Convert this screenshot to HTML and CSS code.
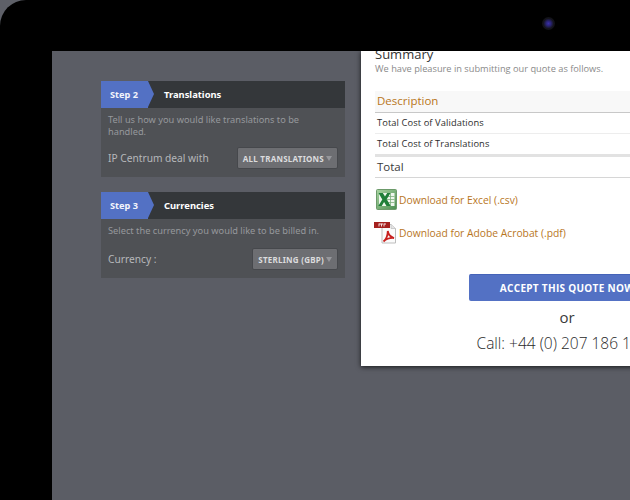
FILE: index.html
```html
<!DOCTYPE html>
<html lang="en">
<head>
<meta charset="utf-8">
<title>Quote</title>
<link rel="stylesheet" href="styles.css">
</head>
<body>
<div class="device">
  <div class="camera"></div>
  <div class="screen">
    <div class="steps">
      <section class="panel">
        <header class="panel-head">
          <span class="step">Step 2</span>
          <span class="panel-title">Translations</span>
        </header>
        <div class="panel-body">
          <p class="hint">Tell us how you would like translations to be handled.</p>
          <div class="field">
            <span class="field-label">IP Centrum deal with</span>
            <span class="select">ALL TRANSLATIONS<i class="caret"></i></span>
          </div>
        </div>
      </section>
      <section class="panel">
        <header class="panel-head">
          <span class="step">Step 3</span>
          <span class="panel-title">Currencies</span>
        </header>
        <div class="panel-body">
          <p class="hint hint-single">Select the currency you would like to be billed in.</p>
          <div class="field">
            <span class="field-label">Currency :</span>
            <span class="select">STERLING (GBP)<i class="caret"></i></span>
          </div>
        </div>
      </section>
    </div>
    <main class="quote">
      <h2 class="quote-title">Summary</h2>
      <p class="quote-sub">We have pleasure in submitting our quote as follows.</p>
      <div class="table">
        <div class="row-head">Description</div>
        <div class="row">Total Cost of Validations</div>
        <div class="row row-last">Total Cost of Translations</div>
        <div class="row-total">Total</div>
      </div>
      <a class="download dl-excel" href="#">
        <svg class="icon" width="21" height="21" viewBox="0 0 21 21">
          <defs><linearGradient id="xg" x1="0" y1="0" x2="1" y2="1"><stop offset="0" stop-color="#a9d3a2"/><stop offset="1" stop-color="#4c8f50"/></linearGradient></defs>
          <rect x="0.5" y="0.5" width="20" height="20" rx="1" fill="url(#xg)" stroke="#6c9a6a"/>
          <rect x="3" y="4" width="15.500" height="13" fill="#eef6ec"/>
          <path d="M11 7.500h7.500M11 10.500h7.500M11 13.500h7.500M14.500 4v13" stroke="#7db07c" stroke-width="0.8"/>
          <path d="M2.500 4h4.300l2.200 3.600L11.200 4h3.300l-3.800 6.200 4 6.800h-4.200l-2.400-4-2.400 4H2.300l4-6.600z" fill="#1f7f38"/>
        </svg>
        <span>Download for Excel (.csv)</span>
      </a>
      <a class="download dl-pdf" href="#">
        <svg class="icon" width="23" height="22" viewBox="0 0 23 22">
          <path d="M8 2.500h9l4.500 4v14.500H8z" fill="#fbfbfb" stroke="#bdbdbd"/>
          <path d="M17 2.500v4h4.500" fill="#e4e4e4" stroke="#bdbdbd" stroke-width="0.7"/>
          <rect x="0" y="0" width="16" height="6" fill="#a5201e"/>
          <path d="M5 1.500v3M7.500 1.500v3M10 1.500v3M5 2h2M7.500 2h1.500M10 2h2" stroke="#f4dede" stroke-width="1"/>
          <path d="M9.500 19.500c2.500-2 4.200-6 4.300-10.500.5 3.500 2.700 6 6.200 7-3.500-.3-7.500.8-10.500 3.500z" fill="none" stroke="#c8201e" stroke-width="1.800"/>
        </svg>
        <span>Download for Adobe Acrobat (.pdf)</span>
      </a>
      <div class="actions">
        <a class="accept" href="#">ACCEPT THIS QUOTE NOW</a>
        <p class="or">or</p>
        <p class="call">Call: +44 (0) 207 186 1500</p>
      </div>
    </main>
  </div>
</div>
</body>
</html>
```
FILE: styles.css
```css
* { box-sizing: border-box; }
html, body { margin: 0; padding: 0; height: 100%; overflow: hidden; background: #5e6068; }
.device {
  position: relative;
  width: 760px;
  height: 560px;
  background: #000;
  border-top-left-radius: 26px;
  padding: 51px 0 0 52px;
}
.camera {
  position: absolute;
  left: 542px;
  top: 17px;
  width: 13px;
  height: 13px;
  border-radius: 50%;
  background: radial-gradient(circle, #3a2fa8 0, #2a2478 25%, #14141c 55%, #0b0b0e 100%);
}
.screen {
  display: flex;
  align-items: flex-start;
  height: 509px;
  background: #5b5d65;
  overflow: hidden;
}
.steps {
  width: 244px;
  margin: 30px 0 0 49px;
  flex: none;
  display: flex;
  flex-direction: column;
  gap: 15px;
  font-family: "Noto Sans", sans-serif;
}
.panel { background: #4f5155; }
.panel-head {
  display: flex;
  align-items: center;
  height: 27px;
  background: #34373a;
}
.step {
  position: relative;
  width: 47px;
  height: 27px;
  line-height: 27px;
  padding-left: 9px;
  background: #5371c4;
  color: #f2f4fb;
  font-size: 9.200px;
  font-weight: 700;
}
.step::after {
  content: "";
  position: absolute;
  left: 47px;
  top: 0;
  border-left: 6px solid #5371c4;
  border-top: 13.500px solid transparent;
  border-bottom: 13.500px solid transparent;
}
.panel-title {
  margin-left: 16px;
  color: #fff;
  font-size: 9.400px;
  font-weight: 700;
}
.panel-body { padding: 6px 7px 8px 7px; }
.hint {
  margin: 0 0 9px;
  color: #96989c;
  font-size: 9.250px;
  line-height: 12px;
}
.hint-single { margin-bottom: 11px; }
.field {
  display: flex;
  align-items: center;
  justify-content: space-between;
}
.field-label { color: #b6b8bb; font-size: 10.200px; }
.select {
  display: flex;
  align-items: center;
  height: 22px;
  padding: 0 2px 0 5px;
  background: #6d6e72;
  border: 1px solid #46484c;
  border-radius: 2px;
  color: #dcdcde;
  font-size: 8px;
  font-weight: 700;
  letter-spacing: 0.25px;
}
.caret {
  margin: 1px 3px 0 2px;
  border-top: 5px solid #96979b;
  border-left: 3px solid transparent;
  border-right: 3px solid transparent;
}
.quote {
  flex: none;
  width: 412px;
  height: 315px;
  margin-left: 16px;
  padding: 0 14px;
  background: #fff;
  box-shadow: 0 1px 5px rgba(0, 0, 0, 0.75);
  font-family: "Open Sans", sans-serif;
}
.quote-title {
  margin: -5px 0 0;
  font-size: 13px;
  font-weight: 400;
  line-height: 16px;
  color: #333;
}
.quote-sub {
  margin: 0;
  font-size: 9.250px;
  line-height: 14px;
  color: #8a8a8a;
}
.table { margin-top: 15px; }
.row-head {
  height: 22px;
  line-height: 20px;
  padding-left: 2px;
  background: #f8f8f8;
  border-bottom: 1px solid #c8c8c8;
  color: #b9761a;
  font-size: 11.500px;
}
.row {
  height: 21px;
  line-height: 20px;
  padding-left: 2px;
  border-bottom: 1px solid #ededed;
  color: #2c2c2c;
  font-size: 9.300px;
  font-weight: 500;
  letter-spacing: 0.1px;
}
.row-last { height: 23px; border-bottom: 3px solid #e2e2e2; }
.row-total {
  height: 21px;
  line-height: 20px;
  padding-left: 2px;
  border-bottom: 1px solid #d6d6d6;
  color: #3a3a3a;
  font-size: 11.500px;
}
.download {
  display: flex;
  align-items: center;
  gap: 2px;
  color: #b8761e;
  font-size: 10.300px;
  text-decoration: none;
}
.dl-excel { margin: 11px 0 0 1px; }
.dl-pdf { margin: 12px 0 0 -1px; }
.icon { flex: none; }
.actions { margin-top: 30px; display: flex; flex-direction: column; align-items: center; }
.accept {
  width: 196px;
  height: 27px;
  line-height: 26px;
  text-align: center;
  background: #5371c4;
  border-top: 1px solid #4563b8;
  border-radius: 2px;
  color: #fff;
  font-size: 10px;
  font-weight: 700;
  letter-spacing: 0.3px;
  text-decoration: none;
}
.or { margin: 6px 0 0; font-size: 15px; line-height: 20px; color: #3a3a3a; }
.call { margin: 6px 0 0; font-size: 15.500px; font-weight: 300; line-height: 20px; color: #2a2a2a; white-space: nowrap; }
```
